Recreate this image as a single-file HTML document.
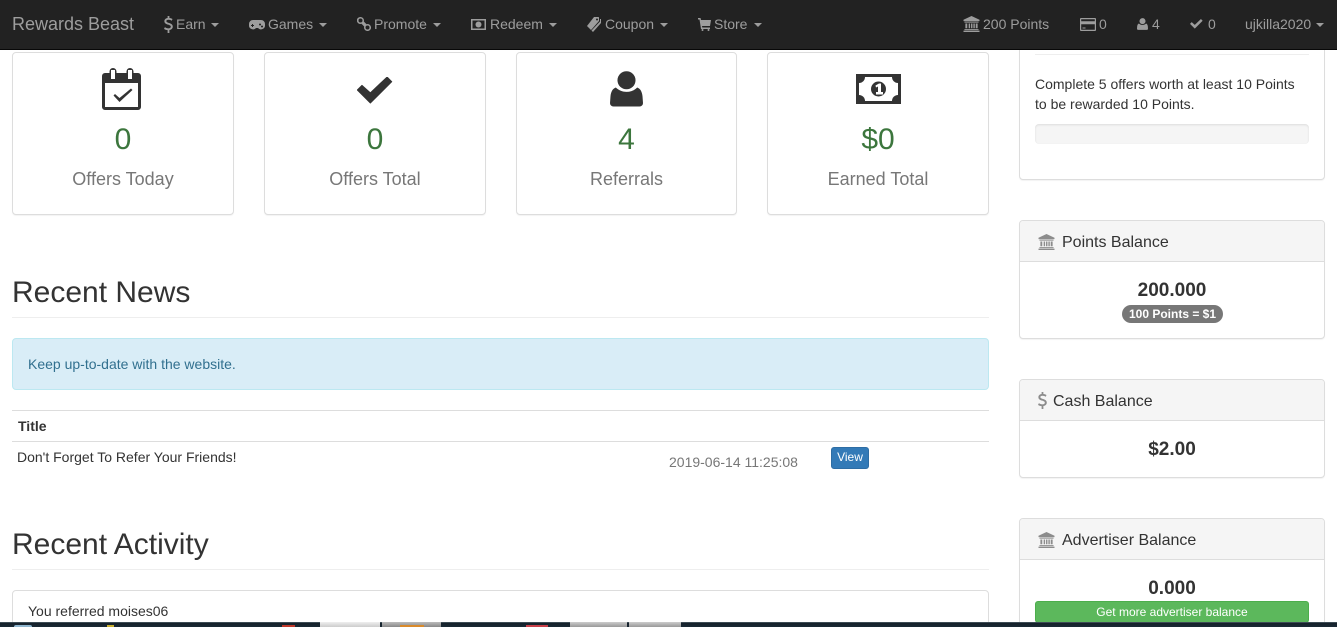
<!DOCTYPE html>
<html lang="en">
<head>
<meta charset="utf-8">
<title>Rewards Beast</title>
<style>
*{box-sizing:border-box}
html,body{margin:0;padding:0;width:1337px;height:627px;overflow:hidden;background:#fff}
body{position:relative;font-family:"Liberation Sans",sans-serif;font-size:14px;line-height:20px;color:#333}
.a{position:absolute;white-space:nowrap}
#nav{position:absolute;left:0;top:0;width:1337px;height:50px;background:#222;border-bottom:1px solid #080808}
.n{position:absolute;top:14px;color:#9d9d9d;font-size:14px;line-height:20px;white-space:nowrap}
.ni{position:absolute;fill:#9d9d9d}
.c{position:absolute;width:0;height:0;border-top:4px solid #9d9d9d;border-left:4px solid transparent;border-right:4px solid transparent;top:23px}
.card{position:absolute;top:52px;height:163px;background:#fff;border:1px solid #ddd;border-radius:4px;box-shadow:0 1px 1px rgba(0,0,0,.05)}
.num{position:absolute;left:0;right:0;top:70px;text-align:center;color:#3c763d;font-size:30px;line-height:33px}
.lab{position:absolute;left:0;right:0;top:116px;text-align:center;color:#777;font-size:18px;line-height:20px}
.ic{position:absolute;fill:#333}
h2{position:absolute;margin:0;left:12px;font-size:30px;font-weight:500;line-height:33px;color:#333}
.hr{position:absolute;left:12px;width:977px;height:1px;background:#eee}
.panel{position:absolute;left:1019px;width:306px;background:#fff;border:1px solid #ddd;border-radius:4px;box-shadow:0 1px 1px rgba(0,0,0,.05)}
.ph{position:absolute;left:0;top:0;width:304px;height:41px;background:#f5f5f5;border-bottom:1px solid #ddd;border-radius:3px 3px 0 0}
.pt{position:absolute;top:11px;font-size:16px;line-height:21px;color:#333;white-space:nowrap}
.pv{position:absolute;left:0;width:304px;text-align:center;font-size:19px;font-weight:700;line-height:20px;color:#333}
.bank{position:absolute;left:18px;top:13px;fill:#8c8c8c}
</style>
</head>
<body>

<div class="card" style="left:12px;width:222px">
  <svg class="ic" style="left:89px;top:15px" width="39" height="42" viewBox="0 0 39 42"><path d="M3 5h4.500V3.500a3.500 3.500 0 0 1 7 0V5h10V3.500a3.500 3.500 0 0 1 7 0V5H36a3 3 0 0 1 3 3v31a3 3 0 0 1-3 3H3a3 3 0 0 1-3-3V8a3 3 0 0 1 3-3zM3 15v24h33V15zM9 2v9h4V2zM26 2v9h4V2z" fill-rule="evenodd"/><path d="M11.500 27.500l1.500-1.500 4.500 4L29 20.500l1.500 1.500-13 12z"/></svg>
  <div class="num">0</div><div class="lab">Offers Today</div>
</div>
<div class="card" style="left:264px;width:222px">
  <svg class="ic" style="left:92px;top:24px" width="36" height="27" viewBox="0 0 38 29"><path d="M0 14l5-5 9 8L32 0l5 5-23 23z" stroke="#333" stroke-width="1" stroke-linejoin="round"/></svg>
  <div class="num">0</div><div class="lab">Offers Total</div>
</div>
<div class="card" style="left:516px;width:221px">
  <svg class="ic" style="left:93px;top:18px" width="33" height="36" viewBox="0 0 34 37"><circle cx="17" cy="9.500" r="9.300"/><path d="M6 17c3 3 7 4.500 11 4.500S25 20 28 17c3 1 5 4 5.500 9l.5 7a3.500 3.500 0 0 1-3.500 3.500h-27A3.500 3.500 0 0 1 0 33l.5-7C1 21 3 18 6 17z"/></svg>
  <div class="num">4</div><div class="lab">Referrals</div>
</div>
<div class="card" style="left:767px;width:222px">
  <svg class="ic" style="left:88px;top:21px" width="45" height="30" viewBox="0 0 45 30"><path d="M0 0h45v30H0zM3 3v24h39V3z" fill-rule="evenodd"/><circle cx="3" cy="3" r="6"/><circle cx="42" cy="3" r="6"/><circle cx="3" cy="27" r="6"/><circle cx="42" cy="27" r="6"/><circle cx="22.500" cy="15" r="7.500"/><path d="M19.500 11.500l3.500-2h2V18h2v2.500h-7V18h2v-5.500l-2 1z" fill="#fff"/></svg>
  <div class="num">$0</div><div class="lab">Earned Total</div>
</div>

<h2 style="top:276px">Recent News</h2>
<div class="hr" style="top:317px"></div>
<div class="a" style="left:12px;top:338px;width:977px;height:52px;background:#d9edf7;border:1px solid #bce8f1;border-radius:4px;color:#31708f;padding:15px">Keep up-to-date with the website.</div>

<div class="a" style="left:12px;top:410px;width:977px;height:1px;background:#ddd"></div>
<div class="a" style="left:18px;top:416px;font-weight:700;color:#333">Title</div>
<div class="a" style="left:12px;top:441px;width:977px;height:1px;background:#ddd"></div>
<div class="a" style="left:17px;top:447px">Don't Forget To Refer Your Friends!</div>
<div class="a" style="left:669px;top:452px;color:#777">2019-06-14 11:25:08</div>
<div class="a" style="left:831px;top:447px;width:38px;height:22px;background:#337ab7;border:1px solid #2e6da4;border-radius:3px;color:#fff;font-size:12px;line-height:18px;text-align:center">View</div>

<h2 style="top:528px">Recent Activity</h2>
<div class="hr" style="top:569px"></div>
<div class="a" style="left:12px;top:590px;width:977px;height:50px;background:#fff;border:1px solid #ddd;border-radius:4px;padding:10px 15px">You referred moises06</div>

<!-- Sidebar -->
<div class="panel" style="top:20px;height:160px">
  <div class="a" style="left:15px;top:33px;width:274px;height:1px;background:#eee"></div>
  <div class="a" style="left:15px;top:53px;line-height:20px">Complete 5 offers worth at least 10 Points<br>to be rewarded 10 Points.</div>
  <div class="a" style="left:15px;top:103px;width:274px;height:20px;background:#f5f5f5;border-radius:4px;box-shadow:inset 0 1px 2px rgba(0,0,0,.1)"></div>
</div>

<div class="panel" style="top:220px;height:119px">
  <div class="ph">
    <svg class="bank" width="17" height="16" viewBox="0 0 17 17"><path d="M8.500 0L17 4v1.500H0V4zM1 6h15v1H1zM2 8h2v5H2zM5.500 8h1.500v5H5.500zM8 8h1.500v5H8zM10.500 8H12v5h-1.500zM13 8h2v5h-2zM1 14h15v1H1zM0 15.500h17V17H0z"/></svg>
    <div class="pt" style="left:42px">Points Balance</div>
  </div>
  <div class="pv" style="top:60px">200.000</div>
  <div class="a" style="left:102px;top:84px;width:101px;height:18px;background:#777;border-radius:9px;color:#fff;font-size:12px;font-weight:700;line-height:18px;text-align:center">100 Points = $1</div>
</div>

<div class="panel" style="top:379px;height:99px">
  <div class="ph">
    <svg class="bank" style="left:18px;top:12px" width="9" height="17" viewBox="0 0 10 19"><path d="M4 0h2v2.200c1.500.2 2.800.7 3.500 1.200L8.600 5.300C7.700 4.700 6.400 4.200 5 4.200c-1.500 0-2.400.6-2.400 1.500 0 1 1 1.400 3 2.100 2.800.9 4.200 2 4.200 4.100 0 2-1.500 3.500-3.800 3.800V19H4v-3.200c-1.600-.1-3.100-.7-4-1.400l1-1.900c1 .7 2.400 1.300 3.900 1.300 1.600 0 2.700-.7 2.700-1.800s-.9-1.600-2.800-2.300C2 8.900.4 7.900.4 5.800.4 4 1.800 2.600 4 2.300z"/></svg>
    <div class="pt" style="left:33px">Cash Balance</div>
  </div>
  <div class="pv" style="top:60px">$2.00</div>
</div>

<div class="panel" style="top:518px;height:130px">
  <div class="ph">
    <svg class="bank" width="17" height="16" viewBox="0 0 17 17"><path d="M8.500 0L17 4v1.500H0V4zM1 6h15v1H1zM2 8h2v5H2zM5.500 8h1.500v5H5.500zM8 8h1.500v5H8zM10.500 8H12v5h-1.500zM13 8h2v5h-2zM1 14h15v1H1zM0 15.500h17V17H0z"/></svg>
    <div class="pt" style="left:42px">Advertiser Balance</div>
  </div>
  <div class="pv" style="top:60px">0.000</div>
  <div class="a" style="left:15px;top:82px;width:274px;height:22px;background:#5cb85c;border:1px solid #4cae4c;border-radius:3px;color:#fff;font-size:12px;line-height:20px;text-align:center">Get more advertiser balance</div>
</div>

<!-- Navbar -->
<div id="nav">
  <div class="n" style="left:12px;top:14px;font-size:18px">Rewards Beast</div>

  <svg class="ni" style="left:164px;top:16px" width="9" height="17" viewBox="0 0 10 19"><path d="M4 0h2v2.200c1.500.2 2.800.7 3.500 1.200L8.600 5.300C7.700 4.700 6.400 4.200 5 4.200c-1.500 0-2.400.6-2.400 1.500 0 1 1 1.400 3 2.100 2.800.9 4.200 2 4.200 4.100 0 2-1.500 3.500-3.800 3.800V19H4v-3.200c-1.600-.1-3.100-.7-4-1.400l1-1.900c1 .7 2.400 1.300 3.900 1.300 1.600 0 2.700-.7 2.700-1.800s-.9-1.600-2.800-2.300C2 8.900.4 7.900.4 5.800.4 4 1.800 2.600 4 2.300z"/></svg>
  <div class="n" style="left:176px">Earn</div><div class="c" style="left:211px"></div>

  <svg class="ni" style="left:249px;top:20px" width="16" height="10" viewBox="0 0 16 10"><path d="M4 0h8a4 4 0 0 1 4 4v1a4 4 0 0 1-7 3H7A4 4 0 0 1 0 5V4a4 4 0 0 1 4-4zM3 4v1H2v1h1v1h1V6h1V5H4V4zM11 3.500a1 1 0 1 0 .01 0zM13 5.500a1 1 0 1 0 .01 0z" fill-rule="evenodd"/></svg>
  <div class="n" style="left:268px">Games</div><div class="c" style="left:319px"></div>

  <svg class="ni" style="left:357px;top:17px" width="14" height="14" viewBox="0 0 14 14"><path d="M3.500 0a3.500 3.500 0 0 1 3.300 4.500l2.700 2.700A3.500 3.500 0 1 1 7.200 9.500L4.500 6.800A3.500 3.500 0 1 1 3.500 0zm0 1.500a2 2 0 1 0 0 4 2 2 0 0 0 0-4zm7 7a2 2 0 1 0 0 4 2 2 0 0 0 0-4z" fill-rule="evenodd"/></svg>
  <div class="n" style="left:374px">Promote</div><div class="c" style="left:433px"></div>

  <svg class="ni" style="left:471px;top:19px" width="15" height="11" viewBox="0 0 15 11"><path d="M0 0h15v11H0zM1.500 1.500v8h12v-8z" fill-rule="evenodd"/><circle cx="7.500" cy="5.500" r="3"/></svg>
  <div class="n" style="left:490px">Redeem</div><div class="c" style="left:549px"></div>

  <svg class="ni" style="left:587px;top:17px" width="14" height="15" viewBox="0 0 14 15"><path d="M7 0h4.500l.5.500v3.500l-7 8-1 1-4-4zM10 1.500a1 1 0 1 0 .01 0z" fill-rule="evenodd"/><path d="M13 2h1v4l-8 9-1.500-1.500 8.500-9z"/></svg>
  <div class="n" style="left:605px">Coupon</div><div class="c" style="left:660px"></div>

  <svg class="ni" style="left:698px;top:18px" width="13" height="13" viewBox="0 0 13 13"><path d="M0 0h2.500l.5 2h10l-1 6H4l.3 1.500H12V11H3L1.500 1.500H0z"/><circle cx="4.500" cy="12" r="1"/><circle cx="10.500" cy="12" r="1"/></svg>
  <div class="n" style="left:714px">Store</div><div class="c" style="left:754px"></div>

  <svg class="ni" style="left:963px;top:16px" width="17" height="16" viewBox="0 0 17 17"><path d="M8.500 0L17 4v1.500H0V4zM1 6h15v1H1zM2 8h2v5H2zM5.500 8h1.500v5H5.500zM8 8h1.500v5H8zM10.500 8H12v5h-1.500zM13 8h2v5h-2zM1 14h15v1H1zM0 15.500h17V17H0z"/></svg>
  <div class="n" style="left:983px">200 Points</div>

  <svg class="ni" style="left:1080px;top:18px" width="16" height="13" viewBox="0 0 16 13"><path d="M1 0h14a1 1 0 0 1 1 1v11a1 1 0 0 1-1 1H1a1 1 0 0 1-1-1V1a1 1 0 0 1 1-1zM1.200 1.200v2h13.600v-2zM1.200 6.200v5.600h13.600V6.200zM2.500 9.500h3v1h-3z" fill-rule="evenodd"/></svg>
  <div class="n" style="left:1099px">0</div>

  <svg class="ni" style="left:1137px;top:17px" width="11" height="14" viewBox="0 0 34 37"><circle cx="17" cy="9.500" r="9.300"/><path d="M6 17c3 3 7 4.500 11 4.500S25 20 28 17c3 1 5 4 5.500 9l.5 7a3.500 3.500 0 0 1-3.500 3.500h-27A3.500 3.500 0 0 1 0 33l.5-7C1 21 3 18 6 17z"/></svg>
  <div class="n" style="left:1152px">4</div>

  <svg class="ni" style="left:1190px;top:19px" width="13" height="10" viewBox="0 0 38 29"><path d="M0 14l5-5 9 8L32 0l5 5-23 23z"/></svg>
  <div class="n" style="left:1208px">0</div>

  <div class="n" style="left:1245px">ujkilla2020</div><div class="c" style="left:1316px"></div>
</div>

<!-- Taskbar sliver -->
<div class="a" style="left:0;top:622px;width:1337px;height:5px;background:linear-gradient(#3d4c55 0,#3d4c55 1px,#15202a 1px,#1a2a36 100%)"></div>
<div class="a" style="left:14px;top:625px;width:18px;height:2px;background:#8fb6cf;border-radius:9px 9px 0 0"></div>
<div class="a" style="left:107px;top:625px;width:7px;height:2px;background:#c9b032"></div>
<div class="a" style="left:282px;top:625px;width:13px;height:2px;background:#c0392b"></div>
<div class="a" style="left:320px;top:622px;width:60px;height:5px;background:linear-gradient(#eee,#ccc)"></div>
<div class="a" style="left:382px;top:622px;width:59px;height:5px;background:linear-gradient(#bbb,#888)"></div>
<div class="a" style="left:400px;top:625px;width:24px;height:2px;background:#d98a2b"></div>
<div class="a" style="left:526px;top:625px;width:22px;height:2px;background:#c9404a"></div>
<div class="a" style="left:570px;top:622px;width:57px;height:5px;background:linear-gradient(#ccc,#999)"></div>
<div class="a" style="left:629px;top:622px;width:52px;height:5px;background:linear-gradient(#ccc,#999)"></div>

</body>
</html>
